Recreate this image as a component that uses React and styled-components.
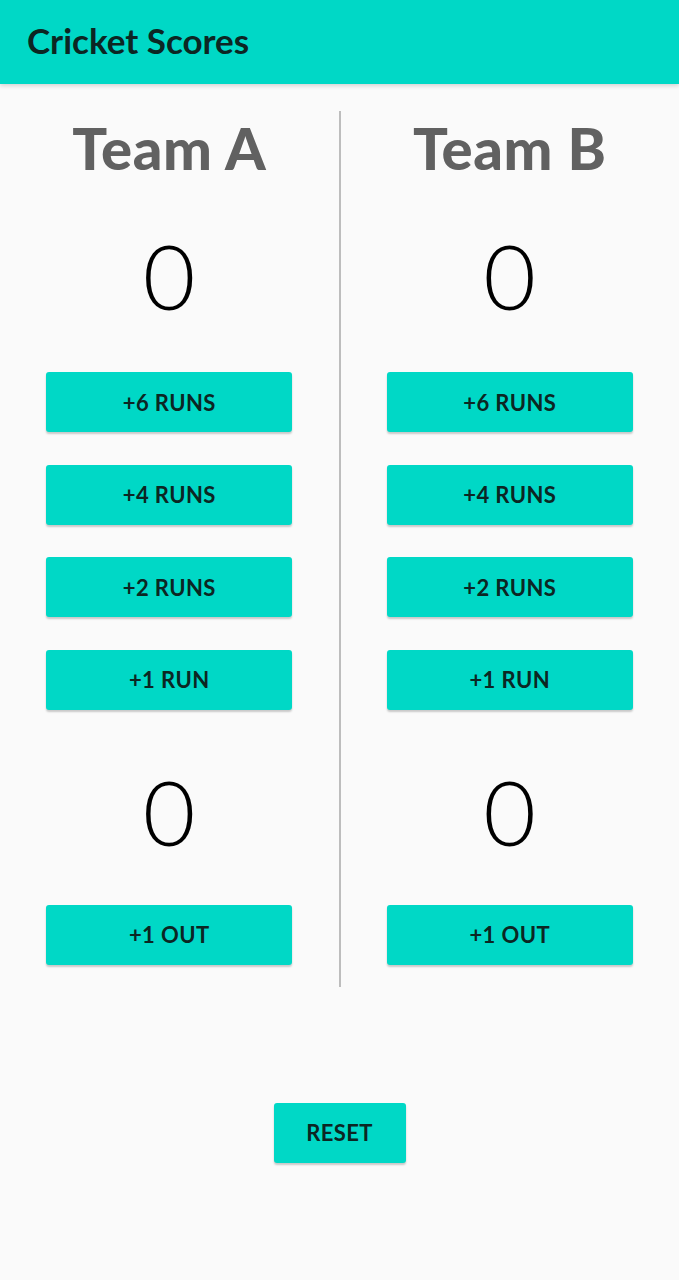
import React, { useState } from 'react';
import styled, { createGlobalStyle } from 'styled-components';

const accent = '#00d8c6';
const ink = '#0c2623';

const GlobalStyle = createGlobalStyle`
  html, body {
    margin: 0;
    padding: 0;
    background: #fafafa;
  }
  body {
    font-family: Lato, "Noto Sans", sans-serif;
  }
`;

const Page = styled.div`
  min-height: 1280px;
  background: #fafafa;
`;

const AppBar = styled.header`
  height: 84px;
  box-sizing: border-box;
  background: ${accent};
  display: flex;
  align-items: center;
  padding: 0 0 5px 27px;
  box-shadow: 0 2px 4px rgba(0, 0, 0, 0.15);
`;

const Title = styled.h1`
  margin: 0;
  font-size: 35px;
  font-weight: 700;
  color: ${ink};
`;

const Board = styled.div`
  display: grid;
  grid-template-columns: 1fr 2px 1fr;
  margin-top: 27px;
`;

const Divider = styled.div`
  background: #bdbdbd;
`;

const TeamColumn = styled.section`
  display: flex;
  flex-direction: column;
  align-items: center;
  padding-top: 3px;
  padding-bottom: 22px;
`;

const TeamName = styled.h2`
  margin: 0;
  font-size: 58px;
  line-height: 68px;
  font-weight: 900;
  letter-spacing: 0.6px;
  color: #616161;
`;

const Score = styled.div`
  margin-top: ${props => props.$gap}px;
  margin-bottom: ${props => props.$after}px;
  font-size: 91px;
  line-height: 112px;
  font-weight: 300;
  color: #000;
`;

const ActionButton = styled.button`
  display: flex;
  align-items: center;
  justify-content: center;
  width: ${props => props.$width || 246}px;
  height: 60px;
  margin-top: ${props => props.$gap || 0}px;
  padding: 0;
  border: none;
  border-radius: 3px;
  background: ${accent};
  color: ${ink};
  font-family: Lato, "Noto Sans", sans-serif;
  font-size: 22px;
  font-weight: 700;
  letter-spacing: 0.4px;
  box-shadow: 0 2px 2px rgba(0, 0, 0, 0.2);
  cursor: pointer;
`;

const Footer = styled.div`
  display: flex;
  justify-content: center;
  margin-top: 116px;
`;

const Team = ({ name, runs, outs, onRuns, onOut }) => (
  <TeamColumn>
    <TeamName>{name}</TeamName>
    <Score $gap={37} $after={41}>{runs}</Score>
    <ActionButton onClick={() => onRuns(6)}>+6 RUNS</ActionButton>
    <ActionButton $gap={32.5} onClick={() => onRuns(4)}>+4 RUNS</ActionButton>
    <ActionButton $gap={32.5} onClick={() => onRuns(2)}>+2 RUNS</ActionButton>
    <ActionButton $gap={32.5} onClick={() => onRuns(1)}>+1 RUN</ActionButton>
    <Score $gap={45} $after={38}>{outs}</Score>
    <ActionButton onClick={onOut}>+1 OUT</ActionButton>
  </TeamColumn>
);

export default function App() {
  const [a, setA] = useState({ runs: 0, outs: 0 });
  const [b, setB] = useState({ runs: 0, outs: 0 });

  const reset = () => {
    setA({ runs: 0, outs: 0 });
    setB({ runs: 0, outs: 0 });
  };

  return (
    <Page>
      <GlobalStyle />
      <AppBar>
        <Title>Cricket Scores</Title>
      </AppBar>
      <Board>
        <Team
          name="Team A"
          runs={a.runs}
          outs={a.outs}
          onRuns={n => setA(s => ({ ...s, runs: s.runs + n }))}
          onOut={() => setA(s => ({ ...s, outs: s.outs + 1 }))}
        />
        <Divider />
        <Team
          name="Team B"
          runs={b.runs}
          outs={b.outs}
          onRuns={n => setB(s => ({ ...s, runs: s.runs + n }))}
          onOut={() => setB(s => ({ ...s, outs: s.outs + 1 }))}
        />
      </Board>
      <Footer>
        <ActionButton $width={132} onClick={reset}>RESET</ActionButton>
      </Footer>
    </Page>
  );
}
